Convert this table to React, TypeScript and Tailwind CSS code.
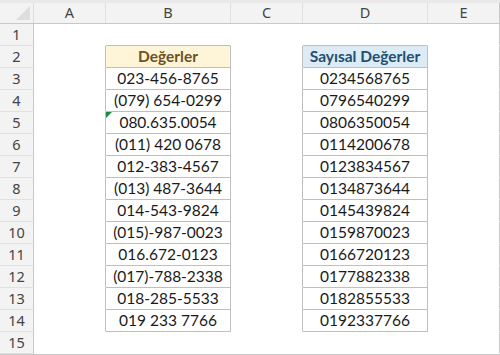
import React from 'react';

const cols = ['A', 'B', 'C', 'D', 'E'];
const widths = ['w-[72px]', 'w-[125px]', 'w-[72px]', 'w-[125px]', 'w-[72px]'];

const values = [
  ['023-456-8765', '0234568765'],
  ['(079) 654-0299', '0796540299'],
  ['080.635.0054', '0806350054'],
  ['(011) 420 0678', '0114200678'],
  ['012-383-4567', '0123834567'],
  ['(013) 487-3644', '0134873644'],
  ['014-543-9824', '0145439824'],
  ['(015)-987-0023', '0159870023'],
  ['016.672-0123', '0166720123'],
  ['(017)-788-2338', '0177882338'],
  ['018-285-5533', '0182855533'],
  ['019 233 7766', '0192337766'],
];

const uiFont = { fontFamily: '"Noto Sans", "Open Sans", sans-serif' };
const cellFont = { fontFamily: 'Lato, "Liberation Sans", sans-serif' };

export default function App() {
  const rows = Array.from({ length: 15 }, (_, i) => i + 1);

  return (
    <div className="w-[500px] h-[355px] bg-white overflow-hidden flex flex-col">
      <div className="h-[3px] bg-[#ebe8e9]" />
      {/* column headers */}
      <div className="flex h-[21px] bg-[#f3f3f3] border-b border-[#c8c8c8]" style={uiFont}>
        <div className="w-[34px] border-r border-[#dcdcdc] relative">
          <div className="absolute right-[3px] bottom-[3px] w-0 h-0 border-l-[14px] border-l-transparent border-b-[14px] border-b-[#dedede]" />
        </div>
        {cols.map((c, i) => (
          <div
            key={c}
            className={`${widths[i]} flex items-center justify-center text-[14.5px] text-[#444] border-r ${i === 4 ? 'border-[#c8c8c8]' : 'border-[#e0e0e0]'}`}
          >
            {c}
          </div>
        ))}
      </div>

      {rows.map((r) => {
        const inTable = r >= 2 && r <= 14;
        const topEdge = r === 1;
        const line = inTable || topEdge;
        const data = r >= 3 ? values[r - 3] : null;
        return (
          <div key={r} className="flex h-[22px]">
            <div
              className="w-[34px] shrink-0 bg-[#f3f3f3] border-r border-r-[#c8c8c8] border-b border-b-[#e0e0e0] flex items-center justify-center text-[14.5px] text-[#444]"
              style={uiFont}
            >
              {r}
            </div>
            {/* A */}
            <div className={`w-[72px] border-r border-b border-b-white ${inTable ? 'border-r-[#bfbfbf]' : 'border-r-white'}`} />
            {/* B */}
            <div
              className={`w-[125px] relative border-r border-b flex items-center justify-center text-[15.5px] ${inTable ? 'border-r-[#bfbfbf]' : 'border-r-white'} ${line ? 'border-b-[#bfbfbf]' : 'border-b-white'} ${r === 2 ? 'bg-[#fef4d7] font-bold text-[#6e5222]' : 'text-[#1a1a1a]'}`}
              style={cellFont}
            >
              {r === 5 && (
                <div className="absolute left-0 top-0 w-0 h-0 border-t-[6px] border-t-[#1e8a3c] border-r-[6px] border-r-transparent" />
              )}
              {r === 2 ? 'Değerler' : data ? data[0] : ''}
            </div>
            {/* C */}
            <div className={`w-[72px] border-r border-b border-b-white ${inTable ? 'border-r-[#bfbfbf]' : 'border-r-white'}`} />
            {/* D */}
            <div
              className={`w-[125px] border-r border-b flex items-center justify-center text-[15.5px] ${inTable ? 'border-r-[#bfbfbf]' : 'border-r-white'} ${line ? 'border-b-[#bfbfbf]' : 'border-b-white'} ${r === 2 ? 'bg-[#ddebf7] font-bold text-[#22506f]' : 'text-[#1a1a1a]'}`}
              style={cellFont}
            >
              {r === 2 ? 'Sayısal Değerler' : data ? data[1] : ''}
            </div>
            {/* E */}
            <div className="w-[72px] border-r border-r-[#c8c8c8] border-b border-b-white" />
          </div>
        );
      })}
      <div className="h-[1px] w-[500px] bg-[#c8c8c8]" />
    </div>
  );
}
